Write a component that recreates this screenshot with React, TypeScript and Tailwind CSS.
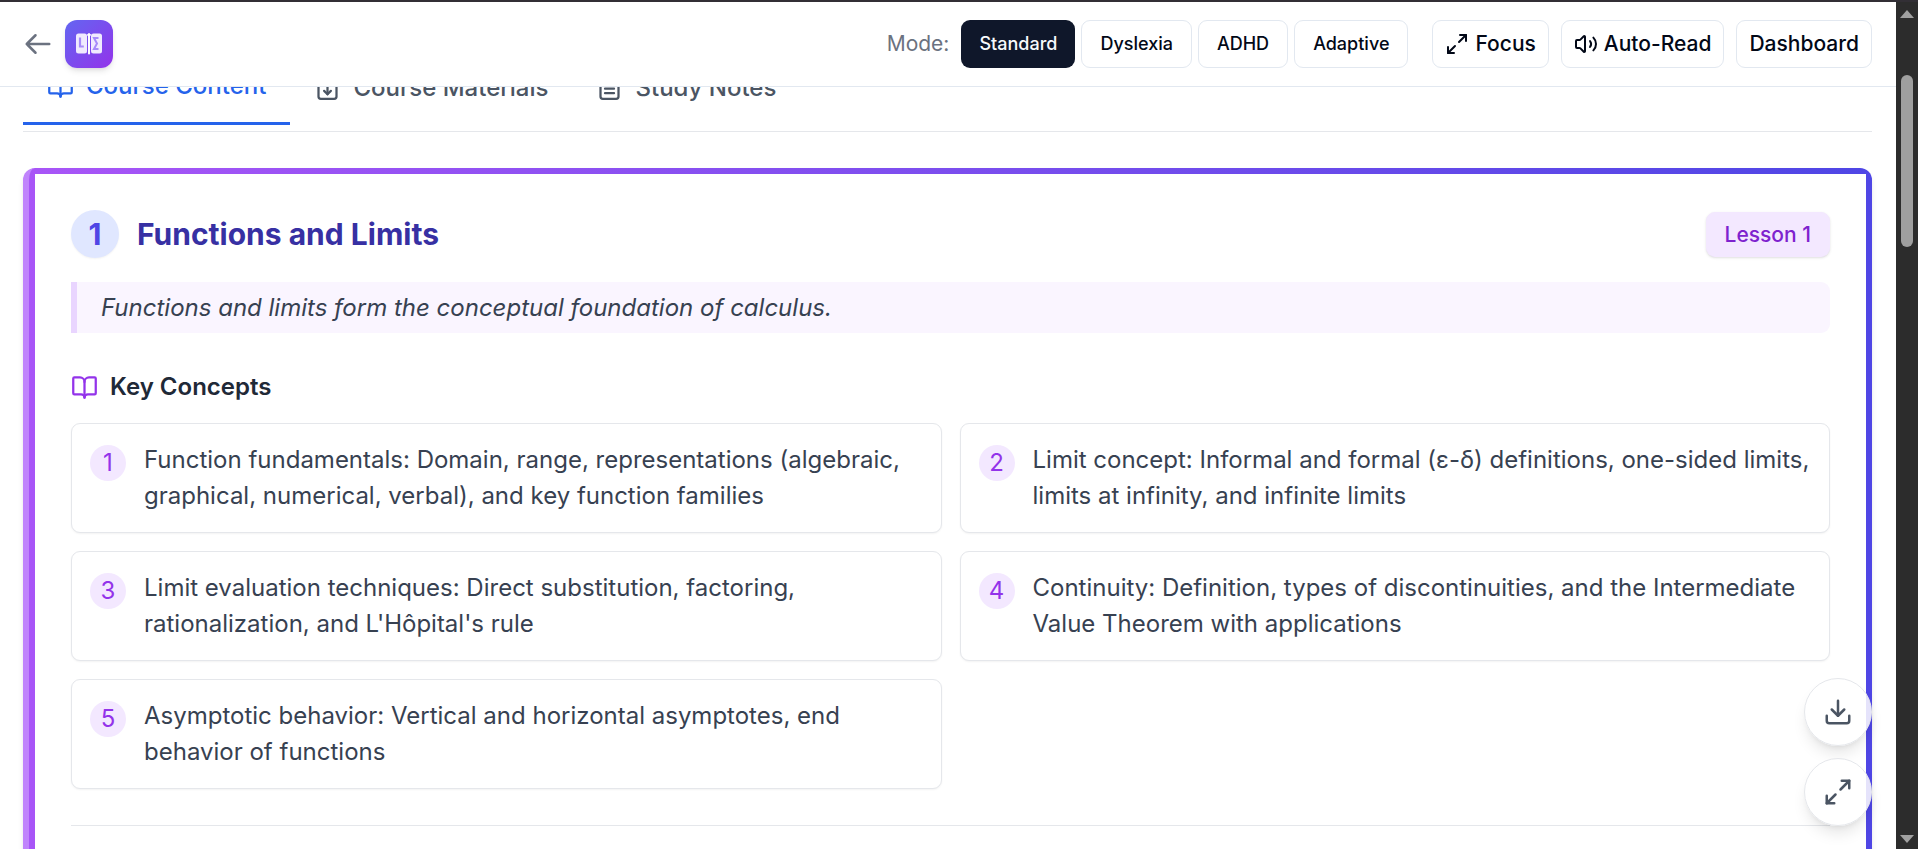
import { BookOpen, Download, FileDown, FileText, Maximize2, Volume2 } from "lucide-react";

const concepts = [
  "Function fundamentals: Domain, range, representations (algebraic, graphical, numerical, verbal), and key function families",
  "Limit concept: Informal and formal (ε-δ) definitions, one-sided limits, limits at infinity, and infinite limits",
  "Limit evaluation techniques: Direct substitution, factoring, rationalization, and L'Hôpital's rule",
  "Continuity: Definition, types of discontinuities, and the Intermediate Value Theorem with applications",
  "Asymptotic behavior: Vertical and horizontal asymptotes, end behavior of functions",
];

const modes = ["Standard", "Dyslexia", "ADHD", "Adaptive"];

function Logo() {
  return (
    <div className="flex size-12 items-center justify-center rounded-xl bg-linear-to-br/srgb from-[#6366f1] to-[#9333ea] shadow-md">
      <svg viewBox="0 0 26 22" className="h-[22px] w-[26px]" aria-hidden="true">
        <rect x="0" y="0.5" width="11" height="20" rx="2.5" fill="#f0ebfe" />
        <rect x="15" y="0.5" width="11" height="20" rx="2.5" fill="#f0ebfe" />
        <rect x="12" y="0" width="2" height="21.5" rx="1" fill="#fff" />
        <path d="M11 1.5l1.500 1M15 1.500l-1.500 1" stroke="#fff" strokeWidth="1.500" />
        <path d="M4 4.500v9h3.800" fill="none" stroke="#a78bfa" strokeWidth="2.200" />
        <path d="M22.500 5h-4.500l3 5.500-3 5.500h4.500" fill="none" stroke="#a78bfa" strokeWidth="2" />
      </svg>
    </div>
  );
}

function Header() {
  const button =
    "flex h-12 items-center gap-1.5 rounded-[9px] border border-[#e2e8f0] bg-white font-medium text-[#020817]";
  return (
    <header className="sticky top-0 z-20 flex items-center justify-between border-t-2 border-b border-t-[#322f35] border-b-[#e2e8f0] bg-white py-[18px] pr-6 pl-[23px]">
      <div className="flex items-center gap-3">
        <button type="button" aria-label="Back" className="text-[#6b7280]">
          <svg
            viewBox="0 0 24 24"
            fill="none"
            stroke="currentColor"
            strokeWidth="2"
            strokeLinecap="round"
            strokeLinejoin="round"
            aria-hidden="true"
            className="size-[30px]"
          >
            <path d="M10 19l-7-7m0 0l7-7m-7 7h18" />
          </svg>
        </button>
        <Logo />
      </div>
      <div className="flex items-center gap-3">
        <div className="mr-3 flex items-center gap-1.5">
          <span className="mr-1.5 text-[21px] text-[#6b7280]">Mode:</span>
          {modes.map((mode, i) => (
            <button
              key={mode}
              type="button"
              aria-pressed={i === 0}
              className={
                i === 0
                  ? "h-12 rounded-[9px] bg-[#0f172a] px-[18px] text-lg font-medium text-[#f8fafc]"
                  : `${button} px-[18px] text-lg`
              }
            >
              {mode}
            </button>
          ))}
        </div>
        <button type="button" className={`${button} px-3 text-[21px]`}>
          <Maximize2 className="size-6" />
          Focus
        </button>
        <button type="button" className={`${button} px-3 text-[21px]`}>
          <Volume2 className="size-6" />
          Auto-Read
        </button>
        <a href="#dashboard" className={`${button} px-3 text-[21px]`}>
          Dashboard
        </a>
      </div>
    </header>
  );
}

function Tabs() {
  const tab = "flex items-center gap-3 px-6 py-[18px] text-2xl leading-9 font-medium";
  return (
    <nav className="-mt-[37px] flex border-b border-[#e5e7eb] pb-1.5">
      <button type="button" className={`${tab} border-b-3 border-[#2563eb] text-[#2563eb]`}>
        <BookOpen className="size-[27px]" />
        Course Content
      </button>
      <button type="button" className={`${tab} text-[#4b5563]`}>
        <FileDown className="size-[27px]" />
        Course Materials
      </button>
      <button type="button" className={`${tab} text-[#4b5563]`}>
        <FileText className="size-[27px]" />
        Study Notes
      </button>
    </nav>
  );
}

function Lesson() {
  return (
    <section className="mt-9 rounded-xl border-l-6 border-[#c084fc] bg-linear-to-r/srgb from-[#a855f7] to-[#4f46e5] p-1.5 pb-0 shadow-md">
      <div className="min-h-[700px] bg-white px-9 pt-9">
        <div className="flex items-center justify-between">
          <h2 className="flex items-center gap-[18px] text-[30px] font-bold text-[#3730a3]">
            <span className="flex size-12 items-center justify-center rounded-full bg-[#e0e7ff] text-[#4f46e5] shadow-xs">
              1
            </span>
            Functions and Limits
          </h2>
          <span className="rounded-[9px] border border-[#f3e8ff] bg-[#f3e8ff] px-[18px] py-1.5 text-[21px] leading-[31px] font-medium text-[#7e22ce] shadow-sm">
            Lesson 1
          </span>
        </div>
        <p className="mt-6 rounded-r-[9px] border-l-6 border-[#e9d5ff] bg-[#faf5ff] py-1.5 pl-6 text-2xl leading-[39px] text-[#374151] italic">
          Functions and limits form the conceptual foundation of calculus.
        </p>
        <h3 className="mt-9 flex items-center gap-3 text-2xl leading-9 font-semibold text-[#1f2937]">
          <BookOpen className="size-[27px] text-[#9333ea]" />
          Key Concepts
        </h3>
        <ul className="mt-[18px] grid grid-cols-2 gap-[18px]">
          {concepts.map((text, i) => (
            <li
              key={text}
              className="flex items-start gap-[18px] rounded-[9px] border border-[#e5e7eb] bg-white p-[18px] shadow-xs"
            >
              <span className="mt-[3px] flex size-9 shrink-0 items-center justify-center rounded-full bg-[#f3e8ff] text-2xl text-[#9333ea]">
                {i + 1}
              </span>
              <span className="text-2xl leading-9 text-[#374151]">{text}</span>
            </li>
          ))}
        </ul>
        <hr className="mt-9 border-[#e5e7eb]" />
      </div>
    </section>
  );
}

function FloatingActions() {
  const action =
    "flex size-[68px] items-center justify-center rounded-full border border-[#e5e7eb] bg-white/85 text-[#4b5563] shadow-lg";
  return (
    <div className="absolute right-6 bottom-[23px] z-10 flex flex-col gap-3">
      <button type="button" aria-label="Download" className={action}>
        <Download className="size-[30px]" />
      </button>
      <button type="button" aria-label="Full screen" className={action}>
        <Maximize2 className="size-[30px]" />
      </button>
    </div>
  );
}

function Scrollbar() {
  return (
    <div
      aria-hidden="true"
      className="flex w-[22px] shrink-0 flex-col items-center border-t-2 border-[#322f35] bg-[#2c2c2c] pt-2 pb-1.5"
    >
      <svg viewBox="0 0 14 8" className="h-2 w-3.5 fill-[#a0a0a0]">
        <path d="M7 0l7 8H0z" />
      </svg>
      <div className="mt-[57px] h-[172px] w-3 rounded-full bg-[#9f9f9f]" />
      <svg viewBox="0 0 14 8" className="mt-auto h-2 w-3.5 fill-[#a0a0a0]">
        <path d="M7 8L0 0h14z" />
      </svg>
    </div>
  );
}

export default function App() {
  return (
    <div className="flex h-screen overflow-hidden bg-white font-['Inter',sans-serif]">
      <div className="relative min-w-0 flex-1 overflow-hidden">
        <Header />
        <main className="pr-6 pl-[23px]">
          <Tabs />
          <Lesson />
        </main>
        <FloatingActions />
      </div>
      <Scrollbar />
    </div>
  );
}
